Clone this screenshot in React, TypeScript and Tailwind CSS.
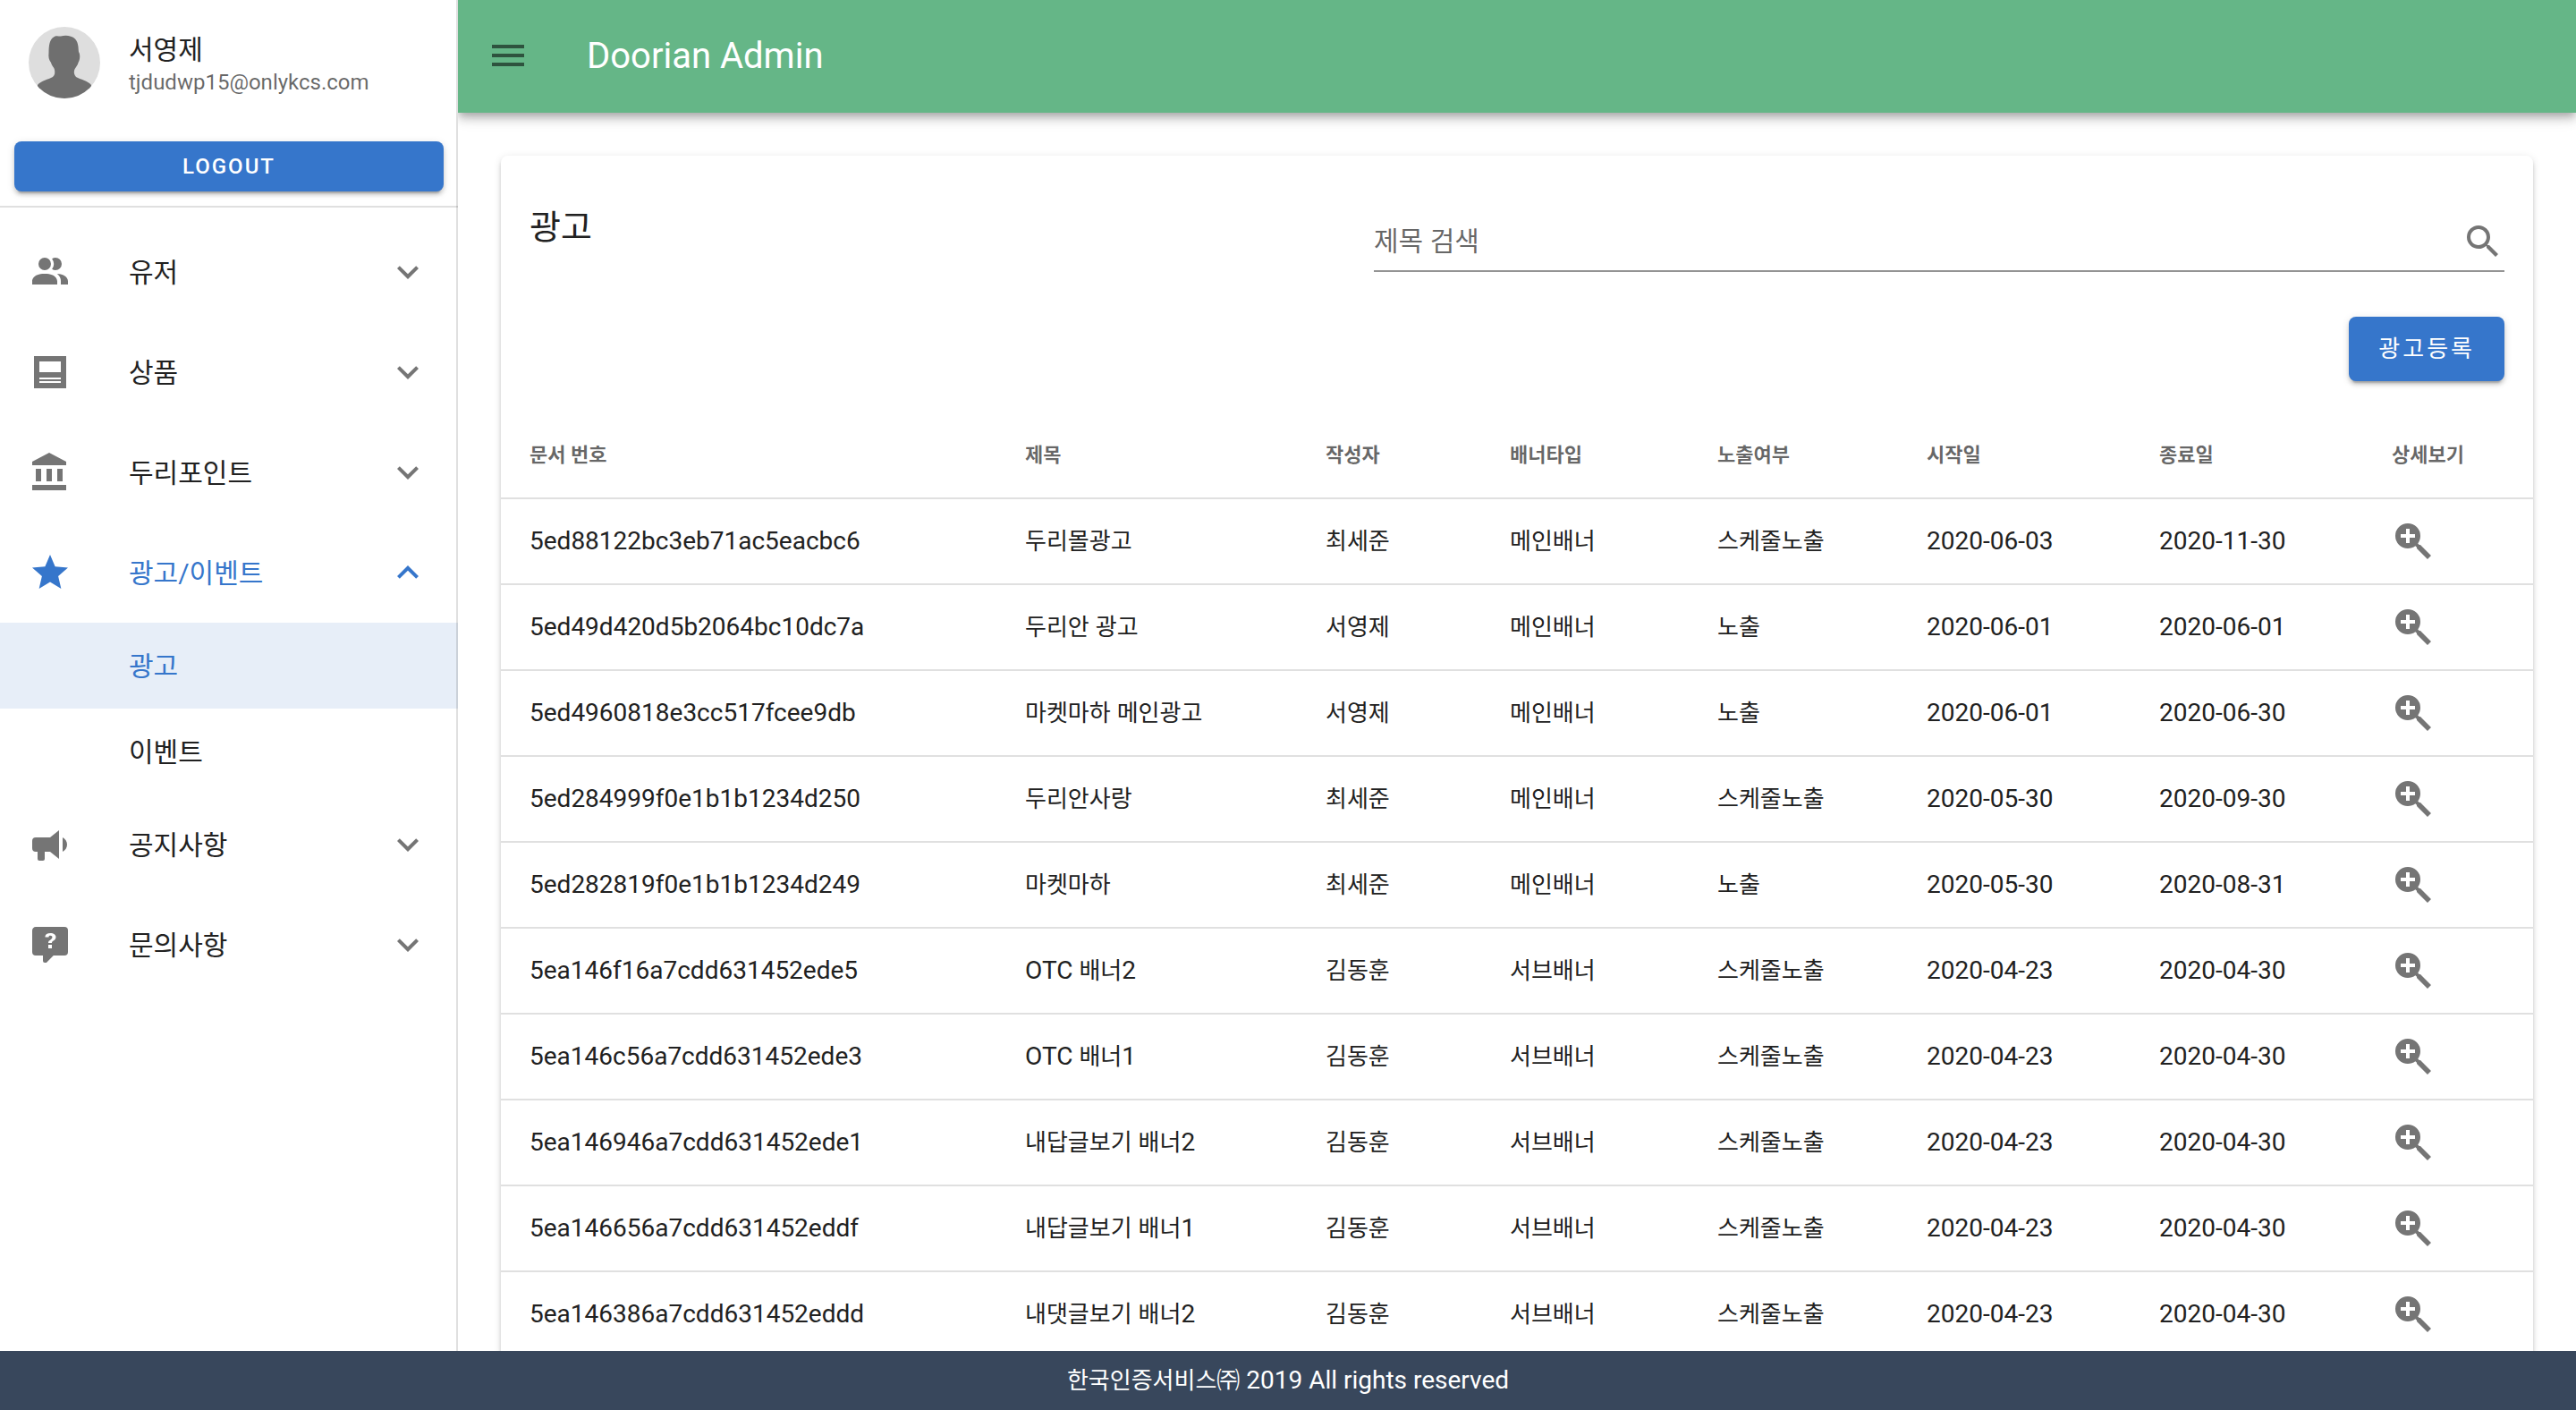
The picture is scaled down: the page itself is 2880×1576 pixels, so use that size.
import React from "react";

const ICONS = {
  menu: "M3,6H21V8H3V6M3,11H21V13H3V11M3,16H21V18H3V16Z",
  users:
    "M16 17V19H2V17S2 13 9 13 16 17 16 17M12.5 7.5A3.5 3.5 0 1 0 9 11A3.5 3.5 0 0 0 12.5 7.5M15.94 13A5.32 5.32 0 0 1 18 17V19H22V17S22 13.37 15.94 13M15 4A3.39 3.39 0 0 0 13.07 4.59A5 5 0 0 1 13.07 10.41A3.39 3.39 0 0 0 15 11A3.5 3.5 0 0 0 15 4Z",
  product: "M3,3V21H21V3H3M6,6H18V12H6V6M6,15H18V16H6V15M6,17H18V18H6V17Z",
  bank: "M11.5,1L2,6V8H21V6M16,10V17H19V10M2,22H21V19H2M10,10V17H13V10M4,10V17H7V10H4Z",
  star: "M12,17.27L18.18,21L16.54,13.97L22,9.24L14.81,8.62L12,2L9.19,8.62L2,9.24L7.45,13.97L5.82,21L12,17.27Z",
  bullhorn:
    "M12,8H4A2,2 0 0,0 2,10V14A2,2 0 0,0 4,16H5V20A1,1 0 0,0 6,21H8A1,1 0 0,0 9,20V16H12L17,20V4L12,8M21.5,12C21.5,13.71 20.54,15.26 19,16V8C20.53,8.75 21.5,10.3 21.5,12Z",
  question:
    "M4,2H20A2,2 0 0,1 22,4V16A2,2 0 0,1 20,18H13.9L10.2,21.71C10,21.9 9.75,22 9.5,22V22H9A1,1 0 0,1 8,21V18H4A2,2 0 0,1 2,16V4C2,2.89 2.9,2 4,2M12.19,5.5C11.3,5.5 10.59,5.68 10.05,6.04C9.5,6.4 9.22,7 9.27,7.69H11.24C11.24,7.41 11.34,7.2 11.5,7.06C11.7,6.92 11.92,6.85 12.19,6.85C12.5,6.85 12.77,6.93 12.95,7.11C13.13,7.28 13.22,7.5 13.22,7.8C13.22,8.08 13.14,8.33 13,8.54C12.83,8.76 12.62,8.94 12.36,9.08C11.84,9.4 11.5,9.68 11.29,9.92C11.1,10.16 11,10.5 11,11H13C13,10.72 13.05,10.5 13.14,10.32C13.23,10.15 13.4,10 13.66,9.85C14.12,9.64 14.5,9.36 14.79,9C15.08,8.63 15.23,8.24 15.23,7.8C15.23,7.1 14.96,6.54 14.42,6.12C13.88,5.71 13.13,5.5 12.19,5.5M11,12V14H13V12H11Z",
  down: "M7.41,8.58L12,13.17L16.59,8.58L18,10L12,16L6,10L7.41,8.58Z",
  up: "M7.41,15.41L12,10.83L16.59,15.41L18,14L12,8L6,14L7.41,15.41Z",
  search:
    "M9.5,3A6.5,6.5 0 0,1 16,9.5C16,11.11 15.41,12.59 14.44,13.73L14.71,14H15.5L20.5,19L19,20.5L14,15.5V14.71L13.73,14.44C12.59,15.41 11.11,16 9.5,16A6.5,6.5 0 0,1 3,9.5A6.5,6.5 0 0,1 9.5,3M9.5,5C7,5 5,7 5,9.5C5,12 7,14 9.5,14C12,14 14,12 14,9.5C14,7 12,5 9.5,5Z",
  zoom: "M9,2A7,7 0 0,1 16,9C16,10.57 15.5,12 14.61,13.19L15.41,14H16L22,20L20,22L14,16V15.41L13.19,14.61C12,15.5 10.57,16 9,16A7,7 0 0,1 2,9A7,7 0 0,1 9,2M8,5V8H5V10H8V13H10V10H13V8H10V5H8Z",
};

type IconName = keyof typeof ICONS;

function Icon({ name, className = "" }: { name: IconName; className?: string }) {
  return (
    <svg viewBox="0 0 24 24" aria-hidden="true" className={`size-12 shrink-0 fill-current ${className}`}>
      <path fillRule="evenodd" d={ICONS[name]} />
    </svg>
  );
}

/* Hangul runs are set a step smaller than the Latin text beside them. */
function Mixed({ text }: { text: string }) {
  return (
    <>
      {text.split(/([\uac00-\ud7a3\u3200-\u32ff]+)/).map((part, i) =>
        i % 2 ? (
          <span key={i} className="text-[26px]">
            {part}
          </span>
        ) : (
          part
        ),
      )}
    </>
  );
}

function Avatar() {
  return (
    <svg viewBox="0 0 80 80" role="img" aria-label="프로필 사진" className="size-20 shrink-0 rounded-full">
      <rect width="80" height="80" fill="#dedede" />
      <path
        fill="#6f6f6f"
        d="M28 11.500C30 9.500 33 10.500 36 10.500C41 9 48 9.500 52 13.500C56 18 55.500 24 56 28C58 31 57.500 37 55.500 40C54.500 44 51.500 46 51 49C50.500 51 51 54 53 56C58 59 66 60 70 65V80H10V65C14 60 22 59 27 56C29.500 54 29.500 51 29 48C28.500 45 26 44 25 40C22.500 37 22 33 22.500 29C22.500 22 23 14.500 28 11.500Z"
      />
    </svg>
  );
}

type Group = { label: string; icon: IconName; children?: { label: string; active?: boolean }[] };

const NAV: Group[] = [
  { label: "유저", icon: "users" },
  { label: "상품", icon: "product" },
  { label: "두리포인트", icon: "bank" },
  { label: "광고/이벤트", icon: "star", children: [{ label: "광고", active: true }, { label: "이벤트" }] },
  { label: "공지사항", icon: "bullhorn" },
  { label: "문의사항", icon: "question" },
];

function NavGroup({ group }: { group: Group }) {
  const open = Boolean(group.children);
  return (
    <li>
      <button
        type="button"
        aria-expanded={open}
        className={`flex h-28 w-full items-center px-8 text-left ${open ? "text-[#3676cb]" : "text-[#212121]"}`}
      >
        <Icon name={group.icon} className={open ? "" : "text-[#757575]"} />
        <span className="ml-16 flex-1 pt-0.5 text-[30px] leading-10">{group.label}</span>
        <Icon name={open ? "up" : "down"} className={open ? "" : "text-[#757575]"} />
      </button>
      {group.children && (
        <ul>
          {group.children.map((c) => (
            <li key={c.label}>
              <a
                href="#"
                aria-current={c.active ? "page" : undefined}
                className={`flex h-24 items-center pt-0.5 pl-36 text-[30px] leading-10 ${
                  c.active ? "bg-[#e7eef8] text-[#3676cb]" : "text-[#212121]"
                }`}
              >
                {c.label}
              </a>
            </li>
          ))}
        </ul>
      )}
    </li>
  );
}

function Sidebar() {
  return (
    <aside className="relative z-10 w-[512px] shrink-0 bg-white after:pointer-events-none after:absolute after:inset-y-0 after:right-0 after:w-0.5 after:bg-black/12">
      <div className="border-b-2 border-black/12 px-4 pt-[30px] pb-4">
        <div className="flex h-20 items-center gap-8 px-4">
          <Avatar />
          <div className="pt-1">
            <p className="text-[30px] leading-10">서영제</p>
            <p className="text-2xl leading-8 text-black/60">tjdudwp15@onlykcs.com</p>
          </div>
        </div>
        <button
          type="button"
          className="mt-12 h-14 w-full rounded-lg bg-[#3676cb] text-2xl font-medium tracking-[2px] text-white shadow-[0_6px_2px_-4px_rgba(0,0,0,0.2),0_4px_4px_0_rgba(0,0,0,0.14),0_2px_10px_0_rgba(0,0,0,0.12)]"
        >
          LOGOUT
        </button>
      </div>
      <nav className="pt-4">
        <ul>
          {NAV.map((g) => (
            <NavGroup key={g.label} group={g} />
          ))}
        </ul>
      </nav>
    </aside>
  );
}

const HEADERS = ["문서 번호", "제목", "작성자", "배너타입", "노출여부", "시작일", "종료일", "상세보기"];

const ROWS = [
  ["5ed88122bc3eb71ac5eacbc6", "두리몰광고", "최세준", "메인배너", "스케줄노출", "2020-06-03", "2020-11-30"],
  ["5ed49d420d5b2064bc10dc7a", "두리안 광고", "서영제", "메인배너", "노출", "2020-06-01", "2020-06-01"],
  ["5ed4960818e3cc517fcee9db", "마켓마하 메인광고", "서영제", "메인배너", "노출", "2020-06-01", "2020-06-30"],
  ["5ed284999f0e1b1b1234d250", "두리안사랑", "최세준", "메인배너", "스케줄노출", "2020-05-30", "2020-09-30"],
  ["5ed282819f0e1b1b1234d249", "마켓마하", "최세준", "메인배너", "노출", "2020-05-30", "2020-08-31"],
  ["5ea146f16a7cdd631452ede5", "OTC 배너2", "김동훈", "서브배너", "스케줄노출", "2020-04-23", "2020-04-30"],
  ["5ea146c56a7cdd631452ede3", "OTC 배너1", "김동훈", "서브배너", "스케줄노출", "2020-04-23", "2020-04-30"],
  ["5ea146946a7cdd631452ede1", "내답글보기 배너2", "김동훈", "서브배너", "스케줄노출", "2020-04-23", "2020-04-30"],
  ["5ea146656a7cdd631452eddf", "내답글보기 배너1", "김동훈", "서브배너", "스케줄노출", "2020-04-23", "2020-04-30"],
  ["5ea146386a7cdd631452eddd", "내댓글보기 배너2", "김동훈", "서브배너", "스케줄노출", "2020-04-23", "2020-04-30"],
];

function AdTable() {
  return (
    <table className="w-full table-fixed border-separate border-spacing-0 text-left">
      <colgroup>
        <col className="w-[554px]" />
        <col className="w-[336px]" />
        <col className="w-[206px]" />
        <col className="w-[232px]" />
        <col className="w-[234px]" />
        <col className="w-[260px]" />
        <col className="w-[260px]" />
        <col className="w-[190px]" />
      </colgroup>
      <thead>
        <tr className="text-[22px] text-black/60">
          {HEADERS.map((h) => (
            <th key={h} scope="col" className="h-[98px] border-b-2 border-[#e0e0e0] px-8 font-bold whitespace-nowrap">
              {h}
            </th>
          ))}
        </tr>
      </thead>
      <tbody>
        {ROWS.map((row) => (
          <tr key={row[0]} className="text-[28px]">
            {row.map((cell, i) => (
              <td key={i} className="h-24 border-b-2 border-[#e0e0e0] px-8 leading-10 whitespace-nowrap">
                <Mixed text={cell} />
              </td>
            ))}
            <td className="h-24 border-b-2 border-[#e0e0e0] px-8">
              <button type="button" aria-label="상세보기" className="block text-[#757575]">
                <Icon name="zoom" />
              </button>
            </td>
          </tr>
        ))}
      </tbody>
    </table>
  );
}

export default function App() {
  return (
    <div className="flex h-screen flex-col overflow-hidden bg-white font-['Roboto','Noto_Sans_CJK_KR',sans-serif] text-[#212121]">
      <div className="flex min-h-0 flex-1">
        <Sidebar />
        <div className="flex min-w-0 flex-1 flex-col">
          <header className="relative flex h-[126px] shrink-0 items-center gap-16 bg-[#65b687] px-8 pb-0.5 shadow-[0_4px_8px_-2px_rgba(0,0,0,0.2),0_8px_10px_0_rgba(0,0,0,0.14),0_2px_20px_0_rgba(0,0,0,0.12)]">
            <button type="button" aria-label="메뉴" className="text-black/54">
              <Icon name="menu" />
            </button>
            <h1 className="pt-0.5 text-[40px] leading-[60px] text-white">Doorian Admin</h1>
          </header>
          <main className="min-h-0 flex-1 overflow-hidden p-12">
            <section className="rounded-lg bg-white shadow-[0_6px_2px_-4px_rgba(0,0,0,0.2),0_4px_4px_0_rgba(0,0,0,0.14),0_2px_10px_0_rgba(0,0,0,0.12)]">
              <div className="grid grid-cols-[59fr_79fr] px-8 pt-12">
                <h2 className="pt-1.5 text-[38px] leading-[52px] font-normal">광고</h2>
                <label className="mt-4 flex h-[66px] items-center border-b-2 border-black/42">
                  <input
                    type="text"
                    aria-label="제목 검색"
                    placeholder="제목 검색"
                    className="min-w-0 flex-1 bg-transparent text-[30px] leading-10 outline-none placeholder:text-black/60"
                  />
                  <Icon name="search" className="text-[#757575]" />
                </label>
              </div>
              <div className="flex justify-end px-8 pt-[50px] pb-[34px]">
                <button
                  type="button"
                  className="h-[72px] rounded-lg bg-[#3676cb] px-[33px] text-[26px] font-normal tracking-[3px] text-white shadow-[0_6px_2px_-4px_rgba(0,0,0,0.2),0_4px_4px_0_rgba(0,0,0,0.14),0_2px_10px_0_rgba(0,0,0,0.12)]"
                >
                  광고등록
                </button>
              </div>
              <AdTable />
            </section>
          </main>
        </div>
      </div>
      <footer className="relative z-20 flex h-[66px] shrink-0 items-center justify-center bg-[#38475c] text-[28px] leading-10 text-white">
        <p>
          <Mixed text="한국인증서비스㈜ 2019 All rights reserved" />
        </p>
      </footer>
    </div>
  );
}
